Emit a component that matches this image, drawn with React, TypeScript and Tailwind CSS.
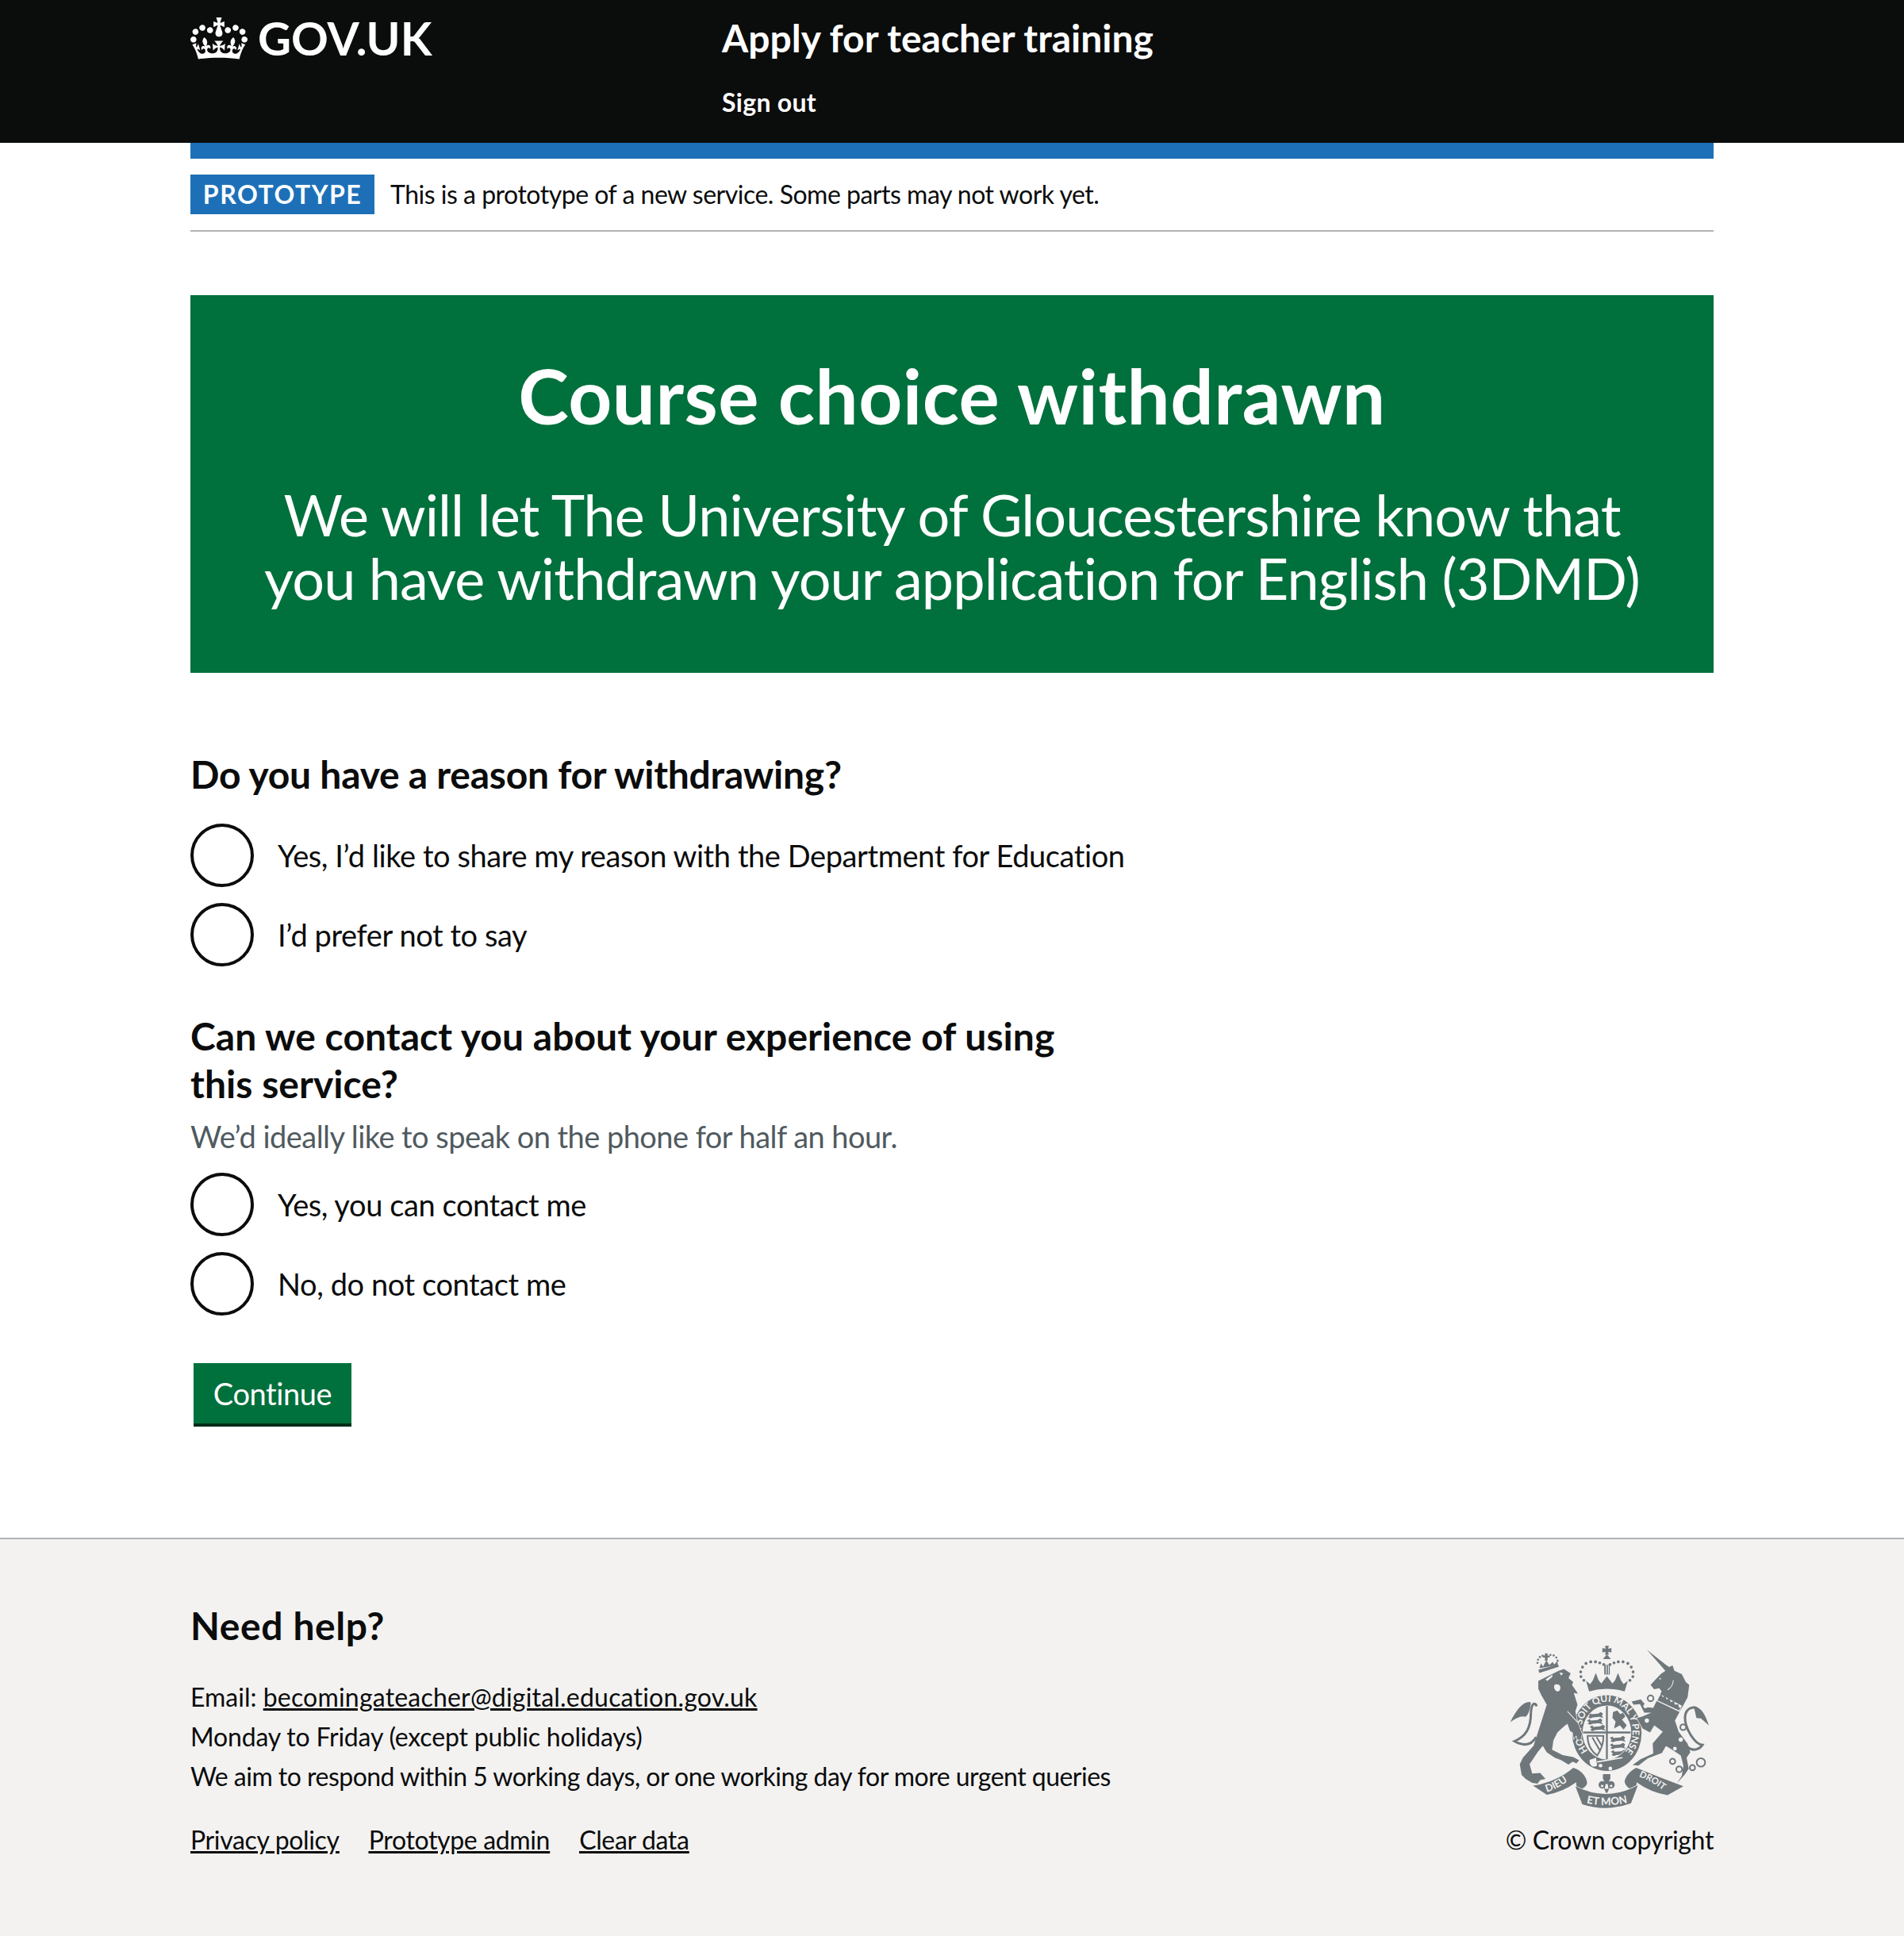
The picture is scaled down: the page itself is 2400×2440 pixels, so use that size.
const font = "font-['Lato','Noto_Sans',sans-serif]";

function CrownLogo() {
  return (
    <svg width="72" height="53" viewBox="0 0 132 97" className="shrink-0 text-white">
      <path
        fill="currentColor"
        fillRule="evenodd"
        d="M25 30.2c3.5 1.5 7.7-.2 9.1-3.7 1.5-3.6-.2-7.8-3.9-9.2-3.6-1.4-7.6.3-9.1 3.9-1.4 3.5.3 7.5 3.9 9zM9 39.5c3.6 1.5 7.8-.2 9.2-3.7 1.5-3.6-.2-7.8-3.9-9.1-3.6-1.5-7.6.2-9.1 3.8-1.4 3.5.3 7.5 3.8 9zM4.4 57.2c3.5 1.5 7.7-.2 9.1-3.8 1.5-3.6-.2-7.7-3.9-9.1-3.5-1.5-7.6.3-9.1 3.8-1.4 3.5.3 7.6 3.9 9.1zm38.3-21.4c3.5 1.5 7.7-.2 9.1-3.8 1.5-3.6-.2-7.7-3.9-9.1-3.6-1.5-7.6.3-9.1 3.8-1.3 3.6.4 7.7 3.9 9.1zm64.4-5.6c-3.6 1.5-7.8-.2-9.1-3.7-1.5-3.6.2-7.8 3.8-9.2 3.6-1.4 7.7.3 9.2 3.9 1.3 3.5-.4 7.5-3.9 9zm15.9 9.3c-3.6 1.5-7.7-.2-9.1-3.7-1.5-3.6.2-7.8 3.8-9.1 3.6-1.5 7.7.2 9.2 3.8 1.5 3.5-.3 7.5-3.9 9zm4.7 17.7c-3.6 1.5-7.8-.2-9.2-3.8-1.5-3.6.2-7.7 3.9-9.1 3.6-1.5 7.7.3 9.2 3.8 1.3 3.5-.4 7.6-3.9 9.1zM89.3 35.8c-3.6 1.5-7.8-.2-9.2-3.8-1.4-3.6.2-7.7 3.9-9.1 3.6-1.5 7.7.3 9.2 3.8 1.4 3.6-.3 7.7-3.9 9.1zM69.7 17.7l8.9 4.7V9.3l-8.9 2.8c-.2-.3-.5-.6-.9-.9L72.4 0H59.6l3.5 11.2c-.3.3-.6.5-.9.9l-8.8-2.8v13.1l8.8-4.7c.3.3.6.7.9.9l-5 15.4v.1c-.2.8-.4 1.6-.4 2.4 0 4.1 3.1 7.5 7 8.1h.2c.3 0 .7.1 1 .1.4 0 .7 0 1-.1h.2c4-.6 7.1-4.1 7.1-8.1 0-.8-.1-1.7-.4-2.4V34l-5.1-15.4c.4-.2.7-.6 1-.9zM66 92.8c16.9 0 32.8 1.1 47.1 3.2 4-16.9 8.9-26.7 14-33.5l-9.6-3.4c1 4.9 1.1 7.2 0 10.2-1.5-1.4-3-4.3-4.2-8.7L108.6 76c2.8-2 5-3.2 7.5-3.3-4.4 9.4-10 11.9-13.6 11.2-4.3-.8-6.3-4.6-5.6-7.9 1-4.7 5.7-5.9 8-.5 4.3-8.7-3-11.4-7.6-8.8 7.1-7.2 7.9-13.5 2.1-21.1-8 6.1-8.1 12.3-4.5 20.8-4.7-5.4-12.1-2.5-9.5 6.2 3.4-5.2 7.9-2 7.2 3.1-.6 4.3-6.4 7.8-13.5 7.2-10.3-.9-10.9-8-11.2-13.8 2.5-.5 7.1 1.8 11 7.3L80.2 60c-4.1 4.4-8 5.3-12.3 5.4 1.4-4.4 8-11.6 8-11.6H55.5s6.4 7.2 7.9 11.6c-4.2-.1-8-1-12.3-5.4l1.4 16.4c3.9-5.5 8.5-7.7 10.9-7.3-.3 5.8-.9 12.8-11.1 13.8-7.2.6-12.9-2.9-13.5-7.2-.7-5 3.8-8.3 7.1-3.1 2.7-8.7-4.6-11.6-9.4-6.2 3.7-8.5 3.6-14.7-4.6-20.8-5.8 7.6-5 13.9 2.2 21.1-4.7-2.6-11.9.1-7.7 8.8 2.3-5.5 7.1-4.2 8.1.5.7 3.3-1.3 7.1-5.7 7.9-3.5.7-9-1.8-13.5-11.2 2.5.1 4.7 1.3 7.5 3.3l-4.7-15.4c-1.2 4.4-2.7 7.2-4.3 8.7-1.1-3-.9-5.3 0-10.2l-9.5 3.4c5 6.9 9.9 16.7 14 33.5 14.8-2.1 30.8-3.2 47.7-3.2z"
      />
    </svg>
  );
}

const grey = "#6f777b";
const paper = "#f3f2f1";

function Dots({ at, r = 4.5 }: { at: number[][]; r?: number }) {
  return (
    <>
      {at.map(([x, y]) => (
        <circle key={`${x}-${y}`} cx={x} cy={y} r={r} fill={grey} />
      ))}
    </>
  );
}

function Rings({ at }: { at: number[][] }) {
  return (
    <>
      {at.map(([x, y, r]) => (
        <circle key={`${x}-${y}`} cx={x} cy={y} r={r} fill={paper} stroke={grey} strokeWidth="6" />
      ))}
    </>
  );
}

// one of the small lions on the shield, about 60 wide
function ShieldLion({ x, y }: { x: number; y: number }) {
  return (
    <g transform={`translate(${x} ${y})`} fill={grey}>
      <path d="M0 8 L10 2 L14 8 L40 6 L50 0 L58 6 L54 14 L60 22 L44 18 L20 20 L12 24 L2 20 L8 14 Z" />
    </g>
  );
}

// royal coat of arms, drawn by hand from crops of the reference
function Crest() {
  const bits = { fontFamily: "Lato, sans-serif", fontWeight: 700 };
  return (
    <svg width="252" height="207" viewBox="100 74 755 620" className="block">
      <defs>
        <path id="garter" d="M66 414 A97 110 0 1 1 208 414" />
        <path id="dieu" d="M232 632 Q290 618 344 566" />
        <path id="droit" d="M584 570 Q640 590 698 638" />
        <path id="etmon" d="M382 670 Q467 690 552 668" />
        <clipPath id="shieldClip">
          <ellipse cx="137" cy="345" rx="90" ry="100" />
        </clipPath>
      </defs>

      {/* garter and shield */}
      <g transform="translate(330 60)">
        <ellipse cx="137" cy="347" rx="131" ry="143" fill={grey} />
        <ellipse cx="137" cy="345" rx="92" ry="102" fill={paper} />
        <text fill={paper} fontSize="36" textLength="490" {...bits}>
          <textPath href="#garter">HONI SOIT QUI MAL Y PENSE</textPath>
        </text>
        <g clipPath="url(#shieldClip)">
          <path fill="none" stroke={grey} strokeWidth="7" d="M137 240 V450 M45 345 H229" />
          <ShieldLion x={64} y={268} />
          <ShieldLion x={62} y={292} />
          <ShieldLion x={72} y={316} />
          <ShieldLion x={148} y={358} />
          <ShieldLion x={148} y={384} />
          <ShieldLion x={152} y={410} />
          <path fill={grey} d="M160 268 L176 262 L188 276 L200 268 L206 286 L194 296 L212 318 L200 334 L186 318 L164 330 L170 304 L158 290 Z" />
          <path fill="none" stroke={grey} strokeWidth="6" d="M64 358 H124 C124 390 112 416 100 432 C76 414 64 388 64 358 Z M82 364 L110 412 M98 362 L118 396" />
        </g>
        {/* buckle */}
        <path fill={paper} d="M72 448 C70 470 84 480 100 470 L96 440 Z" />
        <path fill="none" stroke={paper} strokeWidth="5" d="M100 456 L196 440" />
        <circle cx="113" cy="470" r="7" fill={paper} />
        <circle cx="150" cy="481" r="7" fill={paper} />
      </g>

      {/* main crown */}
      <g transform="translate(330 60)" fill={grey}>
        <path d="M130 18 h14 l-2 11 l12 -3 v17 l-12 -3 l2 11 h-14 l2 -11 l-12 3 v-17 l12 3 Z" />
        <path d="M137 50 L152 68 H122 Z" />
        <path d="M127 90 H148 V126 H127 Z" />
        <Dots
          r={5.5}
          at={[[125, 88], [110, 82], [94, 78], [76, 78], [58, 84], [45, 98], [38, 116], [39, 134], [50, 148], [149, 88], [164, 82], [180, 78], [198, 78], [216, 84], [229, 98], [236, 116], [235, 134], [224, 148]]}
        />
        <path d="M58 150 L74 162 L84 148 L95 120 L106 148 L116 160 L137 132 L158 160 L168 148 L179 120 L190 148 L200 162 L216 150 L204 190 Q137 170 70 190 Z" />
      </g>
      <path fill={paper} d="M463 152 h3 v32 h-3 Z M471 152 h3 v32 h-3 Z" />

      {/* lion */}
      <g transform="translate(90 60)">
        <path
          fill={grey}
          stroke={paper}
          strokeWidth="4"
          paintOrder="stroke"
          d="M118 150 L195 112 L215 105 L240 122 L232 140 L250 155 L245 165 L268 198 L252 196 L266 240 L258 265 L264 300 L272 322 L283 350 L278 372 L266 372 L262 356 L252 368 L248 345 L238 340 L228 312 L215 322 L190 345 L175 375 L170 410 L210 430 L250 438 L272 450 L262 462 L248 455 L232 466 L205 450 L180 440 L150 420 L135 395 L115 420 L85 465 L95 500 L125 498 L145 520 L125 525 L115 538 L95 535 L70 520 L55 505 L48 465 L60 440 L100 395 L118 340 L150 240 L130 205 L118 180 Z"
        />
        <path fill={paper} d="M145 145 L172 126 L170 136 L152 150 Z M198 118 L212 122 L204 130 Z M178 168 C180 160 198 162 200 170 C204 180 198 192 190 190 C182 188 176 178 178 168 Z" />
        <path fill="none" stroke={paper} strokeWidth="3" d="M228 265 L268 308" />
        <path fill="none" stroke={grey} strokeWidth="9" d="M110 362 C90 396 60 396 28 378 C70 360 90 330 90 270 C92 236 105 228 112 246" />
        <path fill={grey} d="M88 230 C60 228 35 260 12 306 C35 290 55 280 70 286 C86 270 86 250 90 236 Z" />
        {/* crown on the lion */}
        <path fill={grey} d="M118 108 L192 88 L196 96 L122 120 Z" />
        <path fill={grey} d="M122 102 L128 84 L136 96 L148 72 L160 90 L172 78 L178 88 L190 76 L192 90 Z" />
        <path fill={grey} d="M143 46 h10 v8 h8 v8 h-8 v12 h-10 v-12 h-8 v-8 h8 Z" />
        <Dots r={4} at={[[115, 82], [117, 70], [124, 60], [134, 55], [164, 52], [176, 54], [186, 62], [191, 74]]} />
      </g>

      {/* unicorn */}
      <g transform="translate(510 60)">
        <path
          fill={grey}
          stroke={paper}
          strokeWidth="4"
          paintOrder="stroke"
          d="M108 33 L178 88 L192 98 L205 92 L212 112 L240 125 L255 155 L268 165 L262 212 L248 238 L232 266 L214 300 L228 342 L262 388 L272 420 L258 440 L266 482 L250 505 L222 536 L240 508 L246 470 L236 432 L206 412 L180 396 L165 422 L112 442 L76 470 L54 468 L84 446 L132 424 L130 386 L156 356 L168 342 L136 318 L120 345 L92 330 L70 290 L90 285 L125 270 L98 270 L82 238 L58 240 L50 228 L85 220 L110 250 L132 252 L146 224 L164 190 L155 178 L135 182 L122 165 L140 146 L160 125 L178 112 Z"
        />
        {/* bright edge on the neck and the collar */}
        <path fill="none" stroke={paper} strokeWidth="3" d="M208 148 C206 166 198 178 186 184" />
        <circle cx="158" cy="142" r="3" fill={paper} />
        <path fill={paper} d="M150 196 L240 244 L232 268 L144 226 Z" />
        <path fill={grey} d="M156 208 L162 200 L168 212 L178 206 L182 220 L194 216 L198 230 L210 226 L214 240 L226 238 L230 252 L236 250 L230 262 L148 224 Z" />
        <path fill="none" stroke={grey} strokeWidth="9" d="M262 400 C285 420 310 405 318 392 C290 390 250 330 252 285 C256 250 290 240 305 265" />
        <path fill={grey} d="M285 245 C315 250 330 280 342 318 L312 292 L295 290 Z" />
        <Rings at={[[122, 216, 11], [108, 300, 11], [245, 325, 11], [205, 454, 10], [230, 484, 11], [280, 478, 10], [312, 458, 16]]} />
        <circle cx="236" cy="372" r="8" fill={paper} />
        <circle cx="214" cy="406" r="7" fill={paper} />
        <circle cx="103" cy="245" r="8" fill={paper} />
      </g>

      {/* motto ribbons */}
      <path fill={grey} stroke={paper} strokeWidth="4" paintOrder="stroke" d="M188 606 Q280 590 340 538 C374 548 394 578 392 598 C386 612 374 618 362 622 C350 608 350 598 352 592 Q300 630 240 640 Z" />
      <path fill={grey} stroke={paper} strokeWidth="4" paintOrder="stroke" d="M756 608 Q670 576 578 538 C552 550 534 575 534 592 C540 610 552 618 566 622 C578 610 582 598 578 592 Q630 630 696 642 Z" />
      <path fill={grey} stroke={paper} strokeWidth="4" paintOrder="stroke" d="M348 608 Q467 668 584 604 L558 672 Q467 706 374 676 Z" />
      <text fill={paper} fontSize="38" {...bits}>
        <textPath href="#dieu" startOffset="8">DIEU</textPath>
      </text>
      <text fill={paper} fontSize="34" {...bits}>
        <textPath href="#droit" startOffset="4">DROIT</textPath>
      </text>
      <text fill={paper} fontSize="40" {...bits}>
        <textPath href="#etmon" startOffset="8">ET MON</textPath>
      </text>
      {/* fleur under the shield */}
      <path fill={grey} d="M452 562 h28 v18 l-6 10 c14 -6 24 4 22 16 c-2 10 -14 14 -20 8 l-4 12 l-6 10 l-6 -10 l-4 -12 c-6 6 -18 2 -20 -8 c-2 -12 8 -22 22 -16 l-6 -10 Z" />
      <path fill={paper} d="M462 600 h8 l3 18 h-14 Z M446 602 l8 2 l-2 8 l-8 -2 Z M486 602 l-8 2 l2 8 l8 -2 Z" />
    </svg>
  );
}

function Radio({ name, label }: { name: string; label: string }) {
  return (
    <label className="flex items-center">
      <input
        type="radio"
        name={name}
        className="m-0 size-20 shrink-0 appearance-none rounded-full border-4 border-[#0b0c0c] bg-white"
      />
      <span className="pl-[30px] text-[38px] leading-[50px] tracking-[-0.42px] text-[#0b0c0c]">{label}</span>
    </label>
  );
}

export default function App() {
  return (
    <div className={`${font} flex min-h-[2440px] flex-col bg-white text-[#0b0c0c] [font-variant-ligatures:none]`}>
      <header className="bg-[#0b0c0c]">
        <div className="mx-auto flex h-[180px] w-[1920px]">
          <div className="w-[670px] pt-[18px]">
            <a className="flex items-center gap-[13px] text-[58px] leading-[60px] font-bold text-white">
              <CrownLogo />
              <span>GOV.UK</span>
            </a>
          </div>
          <div className="pt-[18px]">
            <div className="text-[48px] leading-[60px] font-bold text-white">Apply for teacher training</div>
            <div className="pt-[26px] text-[32px] leading-[50px] font-bold tracking-[0.3px] text-white">Sign out</div>
          </div>
        </div>
      </header>

      <main className="mx-auto w-[1920px] grow">
        <div className="h-5 bg-[#1d70b8]" />
        <div className="flex items-center border-b-2 border-[#b1b4b6] py-5">
          <strong className="flex h-[50px] w-[232px] items-center justify-center bg-[#1d70b8] text-[32px] font-bold tracking-[1.5px] text-white">
            PROTOTYPE
          </strong>
          <span className="pl-5 text-[32px] leading-[50px] tracking-[-0.49px]">This is a prototype of a new service. Some parts may not work yet.</span>
        </div>

        <div className="mt-20 flex h-[476px] flex-col items-center bg-[#00703c] px-[85px] pt-[66px] text-center text-white">
          <h1 className="text-[96px] leading-[120px] font-bold tracking-[0.47px]">Course choice withdrawn</h1>
          <p className="mt-[50px] text-[72px] leading-[80px] tracking-[-0.95px]">
            We will let The University of Gloucestershire know that you have withdrawn your application for English (3DMD)
          </p>
        </div>

        <form className="w-[1280px]">
          <h2 className="mt-[98px] text-[48px] leading-[60px] font-bold tracking-[-0.25px]">Do you have a reason for withdrawing?</h2>
          <div className="mt-[32px] flex flex-col gap-5">
            <Radio name="reason" label="Yes, I’d like to share my reason with the Department for Education" />
            <Radio name="reason" label="I’d prefer not to say" />
          </div>

          <h2 className="mt-[58px] max-w-[1150px] text-[48px] leading-[60px] font-bold tracking-[0.05px]">Can we contact you about your experience of using this service?</h2>
          <p className="mt-[11px] text-[38px] leading-[50px] tracking-[-0.55px] text-[#505a5f]">We’d ideally like to speak on the phone for half an hour.</p>
          <div className="mt-[21px] flex flex-col gap-5">
            <Radio name="contact" label="Yes, you can contact me" />
            <Radio name="contact" label="No, do not contact me" />
          </div>

          <button
            type="button"
            className="mt-[60px] ml-1 h-20 w-[199px] border-b-4 border-[#002d18] bg-[#00703c] text-[38px] tracking-[-0.42px] text-white"
          >
            Continue
          </button>
        </form>
      </main>

      <footer className="h-[502px] border-t-2 border-[#b1b4b6] bg-[#f3f2f1]">
        <div className="mx-auto flex w-[1920px] justify-between pt-[79px]">
          <div>
            <h2 className="text-[48px] leading-[60px] font-bold tracking-[0.6px]">Need help?</h2>
            <div className="mt-[35px] text-[32px] leading-[50px]">
              <p>
                Email: <a className="tracking-[0.2px] underline">becomingateacher@digital.education.gov.uk</a>
              </p>
              <p className="tracking-[-0.19px]">Monday to Friday (except public holidays)</p>
              <p className="tracking-[-0.52px]">We aim to respond within 5 working days, or one working day for more urgent queries</p>
            </div>
            <div className="mt-[30px] flex gap-[37px] text-[32px] leading-[50px] tracking-[-0.35px] underline">
              <a>Privacy policy</a>
              <a>Prototype admin</a>
              <a>Clear data</a>
            </div>
          </div>
          <div className="flex flex-col items-end">
            <div className="mt-[54px] pr-[5px]">
              <Crest />
            </div>
            <div className="mt-[14px] text-[32px] leading-[50px] tracking-[-0.36px]">© Crown copyright</div>
          </div>
        </div>
      </footer>
    </div>
  );
}
